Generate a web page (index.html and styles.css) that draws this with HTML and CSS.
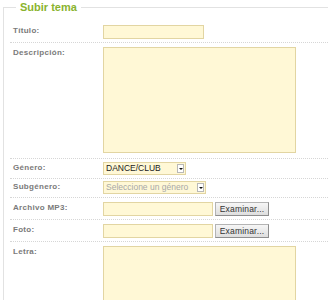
FILE: index.html
```html
<!DOCTYPE html>
<html lang="es">
<head>
    <meta charset="UTF-8">
    <meta name="viewport" content="width=device-width, initial-scale=1.0">
    <title>Subir tema</title>
    <link rel="stylesheet" href="styles.css">
</head>
<body>

    <fieldset class="panel">
        <legend>Subir tema</legend>

        <div class="row">
            <label class="label">Título:</label>
            <input class="field title-field" type="text">
        </div>

        <div class="row row-tall">
            <label class="label">Descripción:</label>
            <textarea class="field area"></textarea>
        </div>

        <div class="row row-select">
            <label class="label">Género:</label>
            <span class="select genre">
                <span class="select-text">DANCE/CLUB</span>
                <span class="arrow"></span>
            </span>
        </div>

        <div class="row row-select row-sub">
            <label class="label">Subgénero:</label>
            <span class="select subgenre">
                <span class="select-text muted">Seleccione un género</span>
                <span class="arrow"></span>
            </span>
        </div>

        <div class="row">
            <label class="label">Archivo MP3:</label>
            <input class="field file-field" type="text">
            <button class="browse">Examinar...</button>
        </div>

        <div class="row">
            <label class="label">Foto:</label>
            <input class="field file-field" type="text">
            <button class="browse">Examinar...</button>
        </div>

        <div class="row row-last">
            <label class="label">Letra:</label>
            <textarea class="field area"></textarea>
        </div>
    </fieldset>

</body>
</html>
```

FILE: styles.css
```css
body {
    margin: 0;
    overflow: hidden;
    font-family: 'Liberation Sans', Arial, sans-serif;
    background-color: #fff;
    color: #666;
}

.panel {
    width: 360px;
    margin: 0 0 0 3px;
    padding: 7px 0 0 6px;
    border: 1px solid #e2e2e2;
    border-right: none;
}

.panel legend {
    margin-left: 6px;
    padding: 0 4px;
    font-size: 11px;
    line-height: 14px;
    font-weight: bold;
    color: #8ab32e;
}

.row {
    display: flex;
    align-items: flex-start;
    padding: 4px 0 3px;
    border-bottom: 1px dotted #d6d6d6;
}
.row-tall {
    padding-bottom: 5px;
}
.row-select {
    padding: 3px 0;
}
.row-sub {
    padding-top: 2px;
}
.row-last {
    border-bottom: none;
}

.label {
    width: 90px;
    padding-left: 3px;
    flex-shrink: 0;
    font-size: 8px;
    line-height: 12px;
    font-weight: bold;
    letter-spacing: 0.3px;
    color: #7a7a7a;
}

.field {
    box-sizing: border-box;
    margin: 0;
    padding: 0 2px;
    height: 14px;
    background-color: #fff8d6;
    border: 1px solid #e2d5a2;
    border-radius: 0;
    font-family: inherit;
    font-size: 9px;
    outline: none;
}
.title-field {
    width: 101px;
}
.file-field {
    width: 110px;
}
.area {
    width: 193px;
    height: 106px;
    resize: none;
}

.select {
    position: relative;
    box-sizing: border-box;
    display: block;
    height: 13px;
    padding-left: 2px;
    background-color: #fff8d6;
    border: 1px solid #e2d5a2;
    font-size: 8.5px;
    line-height: 11px;
}
.genre {
    width: 83px;
}
.subgenre {
    width: 103px;
}
.select-text {
    color: #1a1a1a;
}
.select-text.muted {
    color: #a8a8a8;
}
.arrow {
    position: absolute;
    top: 1px;
    right: 1px;
    width: 7px;
    height: 9px;
    background-color: #fff;
    border: 1px solid #b8b8b8;
    box-sizing: border-box;
}
.arrow::after {
    content: "";
    position: absolute;
    top: 3px;
    left: 1px;
    border-left: 2px solid transparent;
    border-right: 2px solid transparent;
    border-top: 2px solid #111;
}

.browse {
    box-sizing: border-box;
    margin: 0 0 0 2px;
    padding: 0;
    width: 54px;
    height: 14px;
    font-family: inherit;
    font-size: 8.5px;
    line-height: 12px;
    letter-spacing: 0.2px;
    color: #333;
    background: linear-gradient(#f6f6f6, #dedede);
    border: 1px solid #b4b4b4;
    border-right-color: #8e8e8e;
    border-bottom-color: #8e8e8e;
    border-radius: 0;
}
```
